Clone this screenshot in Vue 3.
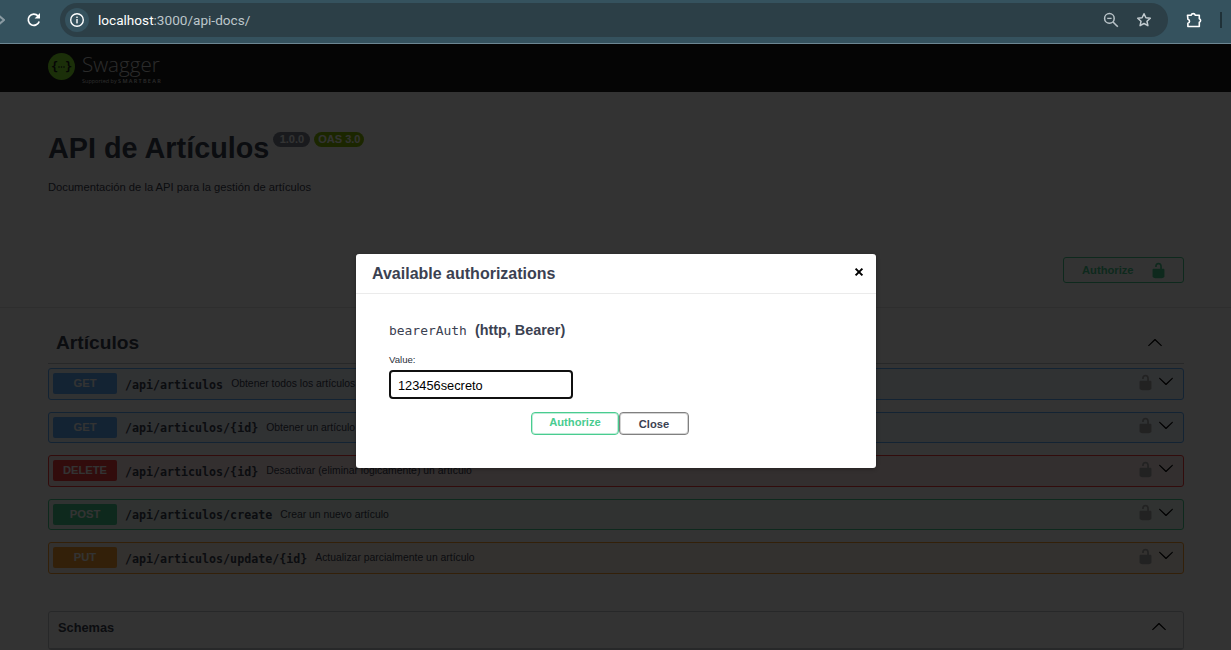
<script setup>
const unlocked = 'M15.8 8H14V5.6C14 2.703 12.665 1 10 1 7.334 1 6 2.703 6 5.6V6h2v-.801C8 3.754 8.797 3 10 3c1.203 0 2 .754 2 2.199V8H4c-.553 0-1 .646-1 1.199V17c0 .549.428 1.139.951 1.307l1.197.387C5.672 18.861 6.55 19 7.1 19h5.8c.549 0 1.428-.139 1.951-.307l1.196-.387c.524-.167.953-.757.953-1.306V9.199C17 8.646 16.352 8 15.8 8z'
const arrow = 'M17.418 6.109c.272-.268.709-.268.979 0s.271.701 0 .969l-7.908 7.83c-.27.268-.707.268-.979 0l-7.908-7.83c-.27-.268-.27-.701 0-.969.271-.268.709-.268.979 0L10 13.25l7.418-7.141z'

const routes = [
  { method: 'GET', kind: 'get', path: '/api/articulos', summary: 'Obtener todos los artículos' },
  { method: 'GET', kind: 'get', path: '/api/articulos/{id}', summary: 'Obtener un artículo por ID' },
  { method: 'DELETE', kind: 'delete', path: '/api/articulos/{id}', summary: 'Desactivar (eliminar lógicamente) un artículo' },
  { method: 'POST', kind: 'post', path: '/api/articulos/create', summary: 'Crear un nuevo artículo' },
  { method: 'PUT', kind: 'put', path: '/api/articulos/update/{id}', summary: 'Actualizar parcialmente un artículo' }
]
</script>

<template>
  <div class="window">
    <div class="browser">
      <svg class="forward" width="5" height="12" viewBox="0 0 5 12"><path d="M-2 1l6 5-6 5" fill="none" stroke="#8a9aa2" stroke-width="2" /></svg>
      <svg class="reload" width="16" height="16" viewBox="0 0 16 16">
        <path d="M13.2 9.4A5.6 5.6 0 1 1 12 3.9" fill="none" stroke="#fff" stroke-width="1.7" />
        <path d="M14 1v5.4H8.6z" fill="#fff" />
      </svg>
      <div class="omnibox">
        <div class="chip">
          <svg width="16" height="16" viewBox="0 0 16 16">
            <circle cx="8" cy="8" r="6.3" fill="none" stroke="#fff" stroke-width="1.4" />
            <rect x="7.3" y="7" width="1.4" height="4.4" fill="#fff" />
            <rect x="7.3" y="4.6" width="1.4" height="1.4" fill="#fff" />
          </svg>
        </div>
        <div class="url"><b>localhost</b>:3000/api-docs/</div>
        <svg class="zoom-icon" width="16" height="16" viewBox="0 0 16 16">
          <circle cx="6.4" cy="6.4" r="4.8" fill="none" stroke="#b9c3c8" stroke-width="1.5" />
          <path d="M4.2 6.4h4.4" stroke="#b9c3c8" stroke-width="1.3" />
          <path d="M10 10l4.8 4.8" stroke="#b9c3c8" stroke-width="1.6" />
        </svg>
        <svg class="star" width="16" height="16" viewBox="0 0 16 16">
          <path d="M8 1.8l1.9 4 4.4.5-3.3 3 .9 4.4L8 11.5l-3.9 2.2.9-4.4-3.3-3 4.4-.5z" fill="none" stroke="#c3ccd0" stroke-width="1.5" stroke-linejoin="round" />
        </svg>
      </div>
      <svg class="puzzle" width="18" height="18" viewBox="0 0 18 18">
        <path d="M2.5 4.2h3.6a2.2 2.2 0 0 1 4.2 0h4v3.5a1.9 1.9 0 0 1 0 3.6v4.2H2.9v-3.2a2.1 2.1 0 0 0 0-4.1z" fill="none" stroke="#fff" stroke-width="1.6" stroke-linejoin="round" />
      </svg>
      <div class="divider"></div>
    </div>

    <div class="page">
      <header class="topbar">
        <svg width="27" height="27" viewBox="0 0 27 27">
          <circle cx="13.5" cy="13.5" r="13.5" fill="#85ea2d" />
          <text x="6.5" y="17.5" text-anchor="middle" class="logo-glyph">{</text>
          <text x="20.5" y="17.5" text-anchor="middle" class="logo-glyph">}</text>
          <circle cx="11" cy="14" r=".8" fill="#1b1b1b" />
          <circle cx="13.5" cy="14" r=".8" fill="#1b1b1b" />
          <circle cx="16" cy="14" r=".8" fill="#1b1b1b" />
        </svg>
        <div class="brand">
          <span class="brand-name">Swagger</span>
          <span class="brand-sub">Supported by <em>SMARTBEAR</em></span>
        </div>
      </header>

      <section class="info">
        <div class="title-row">
          <h1>API de Artículos</h1>
          <span class="pill version">1.0.0</span>
          <span class="pill oas">OAS 3.0</span>
        </div>
        <p>Documentación de la API para la gestión de artículos</p>
      </section>

      <div class="scheme">
        <button class="btn-auth">
          <span>Authorize</span>
          <svg width="17" height="17" viewBox="0 0 20 20"><path :d="unlocked" fill="#49cc90" /></svg>
        </button>
      </div>

      <section class="ops">
        <div class="tag">
          <h2>Artículos</h2>
          <svg width="16" height="16" viewBox="0 0 20 20"><path :d="arrow" transform="rotate(180 10 10)" /></svg>
        </div>
        <div v-for="r in routes" :key="r.method + r.path" class="op" :class="r.kind">
          <span class="method">{{ r.method }}</span>
          <span class="path">{{ r.path }}</span>
          <span class="summary">{{ r.summary }}</span>
          <svg class="lock" width="17" height="17" viewBox="0 0 20 20"><path :d="unlocked" /></svg>
          <svg class="chev" width="16" height="16" viewBox="0 0 20 20"><path :d="arrow" /></svg>
        </div>

        <div class="schemas">
          <div class="schemas-head">
            <h3>Schemas</h3>
            <svg width="16" height="16" viewBox="0 0 20 20"><path :d="arrow" transform="rotate(180 10 10)" /></svg>
          </div>
        </div>
      </section>

      <div class="backdrop">
        <div class="modal">
          <div class="modal-head">
            <h3>Available authorizations</h3>
            <svg width="16" height="16" viewBox="0 0 16 16"><path d="M4.6 4.6l6.8 6.8M11.4 4.6l-6.8 6.8" stroke="#000" stroke-width="2" /></svg>
          </div>
          <div class="modal-body">
            <h4><code>bearerAuth</code>&nbsp;&nbsp;(http, Bearer)</h4>
            <label>Value:</label>
            <input value="123456secreto" />
            <div class="actions">
              <button class="m-auth">Authorize</button>
              <button class="m-close">Close</button>
            </div>
          </div>
        </div>
      </div>
    </div>
  </div>
</template>

<style>
html, body {
  margin: 0;
  overflow: hidden;
}
</style>

<style scoped>
.window {
  width: 1231px;
  height: 650px;
  overflow: hidden;
  font-family: "Liberation Sans", Arial, sans-serif;
  color: #3b4151;
  background: #fff;
}

.browser {
  height: 44px;
  box-sizing: border-box;
  padding-bottom: 3px;
  display: flex;
  align-items: center;
  background: #35525e;
  border-bottom: 1px solid #6d8793;
}

.forward {
  width: 5px;
}

.reload {
  margin-left: 21px;
}

.omnibox {
  margin-left: 18px;
  width: 1108px;
  height: 34px;
  box-sizing: border-box;
  border-radius: 17px;
  background: #2c3f47;
  display: flex;
  align-items: center;
  padding-left: 5px;
}

.chip {
  width: 24px;
  height: 24px;
  border-radius: 50%;
  background: #35525e;
  display: flex;
  align-items: center;
  justify-content: center;
}

.url {
  margin-left: 9px;
  flex: 1;
  font-family: Roboto, sans-serif;
  font-size: 13.6px;
  color: #bcc6ca;
}

.url b {
  font-weight: 400;
  color: #fff;
}

.zoom-icon {
  margin-right: 17px;
}

.star {
  margin-right: 16px;
}

.puzzle {
  margin-left: 17px;
}

.divider {
  width: 2px;
  height: 16px;
  background: #1f3138;
  margin-left: 17px;
}

.page {
  position: relative;
  height: 606px;
  overflow: hidden;
}

.topbar {
  height: 48px;
  background: #1b1b1b;
  padding: 9px 0 0 48px;
  box-sizing: border-box;
  display: flex;
  gap: 7px;
}

.logo-glyph {
  font-family: "DejaVu Sans Mono", monospace;
  font-size: 12px;
  font-weight: 700;
  fill: #1b1b1b;
}

.brand {
  display: flex;
  flex-direction: column;
  color: #d8d8d8;
  margin-top: -2px;
}

.brand-name {
  font-family: "Open Sans", sans-serif;
  font-size: 20.6px;
  font-weight: 300;
  line-height: 26px;
}

.brand-sub {
  font-family: "Open Sans", sans-serif;
  font-size: 5.5px;
  line-height: 6px;
  margin-top: 1px;
  white-space: nowrap;
}

.brand-sub em {
  font-style: normal;
  letter-spacing: 1.3px;
  font-weight: 600;
  font-size: 5.5px;
}

.info {
  height: 165px;
  box-sizing: border-box;
  padding: 40px 48px 0;
}

.title-row {
  display: flex;
  align-items: flex-start;
}

h1 {
  margin: 0;
  font-size: 28.8px;
  font-weight: 700;
  line-height: 33px;
}

.pill {
  height: 15px;
  line-height: 15px;
  border-radius: 8px;
  text-align: center;
  font-size: 11px;
  font-weight: 700;
  color: #fff;
}

.version {
  width: 37px;
  margin-left: 4px;
  background: #7d8492;
}

.oas {
  width: 50px;
  margin-left: 4px;
  background: #89bf04;
}

.info p {
  margin: 16px 0 0;
  font-size: 11.2px;
  line-height: 13px;
}

.scheme {
  display: flex;
  justify-content: flex-end;
  padding: 0 47px 24px 0;
  border-bottom: 1px solid #e4e4e4;
}

.btn-auth {
  width: 121px;
  height: 26px;
  padding: 0 0 0 18px;
  background: #fff;
  border: 1px solid #49cc90;
  border-radius: 3px;
  color: #49cc90;
  font-family: inherit;
  font-size: 11.2px;
  font-weight: 700;
  display: flex;
  align-items: center;
  gap: 16px;
}

.ops {
  padding: 0 47px 0 48px;
}

.tag {
  height: 56px;
  box-sizing: border-box;
  border-bottom: 1px solid #c4c6cb;
  margin-bottom: 4px;
  padding: 14px 21px 0 8px;
  display: flex;
  align-items: center;
  justify-content: space-between;
}

h2 {
  margin: 0;
  font-size: 19.2px;
  font-weight: 700;
}

.op {
  height: 31.5px;
  box-sizing: border-box;
  margin-bottom: 12px;
  border: 1px solid;
  border-radius: 3px;
  padding: 0 9px 0 4px;
  display: flex;
  align-items: center;
}

.method {
  width: 64px;
  height: 21px;
  line-height: 21px;
  flex: none;
  border-radius: 2px;
  color: #fff;
  text-align: center;
  font-size: 11.2px;
  font-weight: 700;
}

.path {
  margin: 2px 0 0 8px;
  font-family: "DejaVu Sans Mono", monospace;
  font-size: 11.65px;
  font-weight: 700;
}

.summary {
  margin-left: 8px;
  font-size: 10.4px;
  flex: 1;
}

.lock {
  fill: #a8a8a8;
  margin: 0 4px 3px 0;
}

.chev {
  margin-bottom: 5px;
}

.get {
  border-color: #61affe;
  background: #eff7ff;
}

.get .method {
  background: #61affe;
}

.delete {
  border-color: #f93e3e;
  background: #feebeb;
}

.delete .method {
  background: #f93e3e;
}

.post {
  border-color: #49cc90;
  background: #edfaf4;
}

.post .method {
  background: #49cc90;
}

.put {
  border-color: #fca130;
  background: #fff5ea;
}

.put .method {
  background: #fca130;
}

.schemas {
  margin-top: 37px;
  border: 1px solid #c4c6cb;
  border-radius: 3px;
}

.schemas-head {
  height: 31px;
  padding: 0 16px 5px 9px;
  display: flex;
  align-items: center;
  justify-content: space-between;
  border-bottom: 1px solid #c4c6cb;
}

.schemas-head h3 {
  margin: 0;
  font-size: 12.8px;
  font-weight: 700;
}

.backdrop {
  position: absolute;
  inset: 0;
  background: rgba(0, 0, 0, 0.8);
  display: flex;
  justify-content: center;
  align-items: flex-start;
  padding-top: 210px;
}

.modal {
  width: 520px;
  height: 214px;
  margin-left: 1px;
  background: #fff;
  border-radius: 3px;
  box-shadow: 0 1px 4px rgba(0, 0, 0, 0.3);
}

.modal-head {
  height: 39px;
  padding: 0 9px 0 16px;
  border-bottom: 1px solid #ebebeb;
  display: flex;
  align-items: center;
  justify-content: space-between;
}

.modal-head h3 {
  margin: 0;
  font-size: 16px;
  font-weight: 700;
}

.modal-head svg {
  margin-top: -4px;
}

.modal-body {
  padding: 27px 33px 0;
}

.modal-body h4 {
  margin: 0;
  font-size: 14.4px;
  line-height: 19px;
  font-weight: 700;
}

.modal-body code {
  font-family: "DejaVu Sans Mono", monospace;
  font-size: 12.95px;
  font-weight: 400;
}

label {
  display: block;
  margin-top: 14px;
  font-size: 9.6px;
  line-height: 12px;
  color: #2a2f3a;
}

input {
  display: block;
  margin-top: 4px;
  width: 184px;
  height: 29px;
  box-sizing: border-box;
  border: 2px solid #101010;
  border-radius: 4px;
  padding: 1px 7px 0;
  font-family: inherit;
  font-size: 12.8px;
  color: #000;
  outline: none;
}

.actions {
  margin: 13px 12px 0 0;
  display: flex;
  justify-content: center;
}

.actions button {
  height: 23px;
  padding: 0;
  background: #fff;
  border-radius: 4px;
  font-family: inherit;
  font-size: 11.2px;
  font-weight: 700;
}

.m-auth {
  width: 88px;
  border: 1px solid #49cc90;
  box-shadow: inset 0 0 0 1px rgba(73, 204, 144, 0.35);
  color: #49cc90;
  padding-bottom: 3px !important;
}

.m-close {
  width: 70px;
  border: 1px solid #808080;
  box-shadow: inset 0 0 0 1px rgba(128, 128, 128, 0.35);
  color: #3b4151;
}
</style>
